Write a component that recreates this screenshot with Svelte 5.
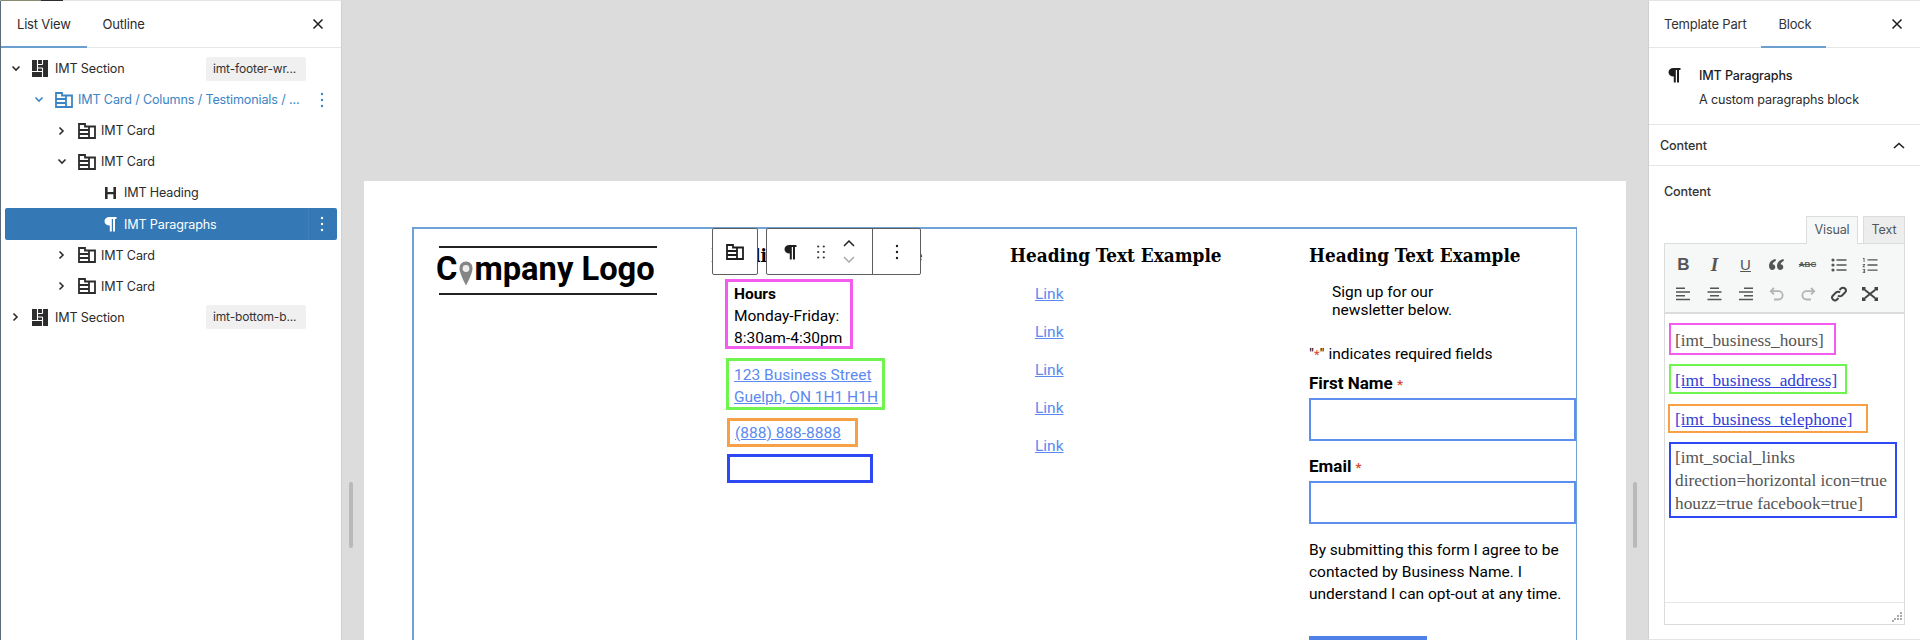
<script>
  const rows = [
    { depth: 0, chevron: "down", icon: "section", label: "IMT Section", tag: "imt-footer-wr..." },
    { depth: 1, chevron: "down", icon: "card", label: "IMT Card / Columns / Testimonials / ...", active: true, menu: true },
    { depth: 2, chevron: "right", icon: "card", label: "IMT Card" },
    { depth: 2, chevron: "down", icon: "card", label: "IMT Card" },
    { depth: 3, icon: "heading", label: "IMT Heading" },
    { depth: 3, icon: "para", label: "IMT Paragraphs", selected: true, menu: true },
    { depth: 2, chevron: "right", icon: "card", label: "IMT Card" },
    { depth: 2, chevron: "right", icon: "card", label: "IMT Card" },
    { depth: 0, chevron: "right", icon: "section", label: "IMT Section", tag: "imt-bottom-b..." },
  ];
  const links = ["Link", "Link", "Link", "Link", "Link"];
</script>

{#snippet cardIcon()}
  <svg width="18" height="16" viewBox="0 0 18 16" fill="none" stroke="currentColor" stroke-width="1.8">
    <path d="M1 1h6v2.500h10V15H1z" />
    <path d="M11 3.500V15M1 7h10M1 11h10" />
  </svg>
{/snippet}

{#snippet paraIcon()}
  <svg width="13" height="16" viewBox="0 0 13 16" fill="currentColor">
    <path d="M5.500 1H12.500V3H11V15.500H9V3H7.800V15.500H5.800V9.500H5.500C2.500 9.500.5 7.700.5 5.200S2.500 1 5.500 1z" />
  </svg>
{/snippet}

{#snippet closeIcon()}
  <svg width="12" height="12" viewBox="0 0 12 12" fill="none" stroke="currentColor" stroke-width="1.5">
    <path d="M1.500 1.500l9 9M10.500 1.500l-9 9" />
  </svg>
{/snippet}

{#snippet dots()}
  <svg width="4" height="16" viewBox="0 0 4 16" fill="currentColor">
    <circle cx="2" cy="2" r="1.200" /><circle cx="2" cy="8" r="1.200" /><circle cx="2" cy="14" r="1.200" />
  </svg>
{/snippet}

<div class="screen">
  <aside class="list-panel">
    <div class="top-strip"></div>
    <div class="tabs">
      <span class="tab on">List View</span>
      <span class="tab">Outline</span>
      <span class="close">{@render closeIcon()}</span>
    </div>
    <ul class="tree">
      {#each rows as row}
        <li class="row d{row.depth}" class:active={row.active} class:selected={row.selected}>
          <span class="chev">
            {#if row.chevron === "down"}
              <svg width="10" height="7" viewBox="0 0 10 7" fill="none" stroke="currentColor" stroke-width="1.6"><path d="M1.500 1.500L5 5l3.500-3.500" /></svg>
            {:else if row.chevron === "right"}
              <svg width="7" height="10" viewBox="0 0 7 10" fill="none" stroke="currentColor" stroke-width="1.6"><path d="M1.500 1.500L5 5 1.500 8.500" /></svg>
            {/if}
          </span>
          <span class="icon">
            {#if row.icon === "section"}
              <svg width="16" height="17" viewBox="0 0 16 17">
                <rect width="16" height="17" fill="currentColor" />
                <path d="M5.500 0v11.500M0 11.500h10.500M10.500 0v4.500M10.500 8v9M5.500 4.500h5M5.500 8h5" fill="none" stroke="#fff" stroke-width="1.100" />
              </svg>
            {:else if row.icon === "card"}
              {@render cardIcon()}
            {:else if row.icon === "heading"}
              <svg width="11" height="14" viewBox="0 0 11 14" fill="currentColor"><path d="M0 1h2.600v5h5.800V1H11v12H8.400V8.200H2.600V13H0z" /></svg>
            {:else}
              {@render paraIcon()}
            {/if}
          </span>
          <span class="label">{row.label}</span>
          {#if row.tag}<span class="tag">{row.tag}</span>{/if}
          {#if row.menu}<span class="menu">{@render dots()}</span>{/if}
        </li>
      {/each}
    </ul>
  </aside>

  <main class="canvas">
    <div class="scrollbar"></div>
    <div class="page">
      <div class="outline">
        <div class="col logo-col">
          <div class="logo">
            <span>C</span><span class="pin"><svg width="14" height="25" viewBox="0 0 14 25"><path fill="#858585" d="M7 .5C3 .5.500 3.500.500 7.500c0 5 6.500 17 6.500 17s6.500-12 6.500-17C13.500 3.500 11 .5 7 .5z" /><circle cx="7" cy="7.500" r="3.400" fill="#eee" /></svg></span><span>mpany Logo</span>
          </div>
        </div>

        <div class="col info-col">
          <h3>Heading Text Example</h3>
          <div class="box pink"><strong>Hours</strong><br />Monday-Friday:<br />8:30am-4:30pm</div>
          <div class="box green"><a href="#top">123 Business Street<br />Guelph, ON 1H1 H1H</a></div>
          <div class="box orange"><a href="#top">(888) 888-8888</a></div>
          <div class="box blue"></div>
        </div>

        <div class="col links-col">
          <h3>Heading Text Example</h3>
          <ul class="links">
            {#each links as link}
              <li><a href="#top">{link}</a></li>
            {/each}
          </ul>
        </div>

        <div class="col form-col">
          <h3>Heading Text Example</h3>
          <p class="intro">Sign up for our<br />newsletter below.</p>
          <p class="req">"<span class="star">*</span>" indicates required fields</p>
          <label class="fld" for="fn">First Name <span class="star">*</span></label>
          <input id="fn" type="text" />
          <label class="fld" for="em">Email <span class="star">*</span></label>
          <input id="em" type="text" />
          <p class="consent">By submitting this form I agree to be contacted by Business Name. I understand I can opt-out at any time.</p>
          <div class="submit"></div>
        </div>

        <div class="block-toolbar">
          <div class="tb-group parent"><span class="tb-ico">{@render cardIcon()}</span></div>
          <div class="tb-group main">
            <span class="tb-para">{@render paraIcon()}</span>
            <svg class="grip" width="8" height="14" viewBox="0 0 8 14" fill="currentColor">
              <circle cx="1.200" cy="1.500" r="1.100" /><circle cx="6.800" cy="1.500" r="1.100" />
              <circle cx="1.200" cy="7" r="1.100" /><circle cx="6.800" cy="7" r="1.100" />
              <circle cx="1.200" cy="12.500" r="1.100" /><circle cx="6.800" cy="12.500" r="1.100" />
            </svg>
            <span class="movers">
              <svg width="12" height="7" viewBox="0 0 12 7" fill="none" stroke="#222" stroke-width="1.500"><path d="M1 6l5-5 5 5" /></svg>
              <svg width="12" height="7" viewBox="0 0 12 7" fill="none" stroke="#aaa" stroke-width="1.500"><path d="M1 1l5 5 5-5" /></svg>
            </span>
            <span class="tb-more">{@render dots()}</span>
          </div>
        </div>
      </div>
    </div>
    <div class="scrollbar"></div>
  </main>

  <aside class="side-panel">
    <div class="tabs side">
      <span class="tab">Template Part</span>
      <span class="tab on">Block</span>
      <span class="close">{@render closeIcon()}</span>
    </div>
    <div class="block-card">
      <span class="bc-icon">{@render paraIcon()}</span>
      <div>
        <div class="bc-title">IMT Paragraphs</div>
        <div class="bc-desc">A custom paragraphs block</div>
      </div>
    </div>
    <div class="section-head">
      <span>Content</span>
      <svg width="12" height="7" viewBox="0 0 12 7" fill="none" stroke="#1e1e1e" stroke-width="1.600"><path d="M1 6l5-4.500L11 6" /></svg>
    </div>
    <div class="section-body">
      <div class="field-label">Content</div>
      <div class="ed-tabs">
        <span class="ed-tab on">Visual</span>
        <span class="ed-tab">Text</span>
      </div>
      <div class="editor">
        <div class="mce-bar">
          <span class="b">B</span>
          <span class="i">I</span>
          <span class="u">U</span>
          <svg width="15" height="11" viewBox="0 0 15 11" fill="#555"><path d="M6.500 0C2.800.8 0 3.200 0 7c0 2.300 1.300 4 3.300 4 1.700 0 3-1.200 3-2.900S5.100 5.300 3.600 5.300c.2-1.400 1.500-2.600 3.300-3.300zM14.500 0c-3.700.8-6.500 3.200-6.500 7 0 2.300 1.300 4 3.300 4 1.700 0 3-1.200 3-2.900s-1.200-2.800-2.700-2.800c.2-1.400 1.500-2.600 3.300-3.300z" /></svg>
          <span class="abc">ABC</span>
          <svg width="16" height="14" viewBox="0 0 16 14" fill="#555"><circle cx="2" cy="2" r="1.600" /><circle cx="2" cy="7" r="1.600" /><circle cx="2" cy="12" r="1.600" /><path d="M5.500 1.200h10v1.500h-10zM5.500 6.200h10v1.500h-10zM5.500 11.200h10v1.500h-10z" /></svg>
          <svg width="16" height="16" viewBox="0 0 16 16" fill="#555"><path d="M5.500 2.200h10v1.400h-10zM5.500 7.300h10v1.400h-10zM5.500 12.400h10v1.400h-10zM1 1h1.500v4H1.600V2H1zM.6 7h2.500v.8L1.600 9.600h1.500v.7H.6v-.7l1.500-1.800H.6zM.6 12h2.500v4H.6v-.7h1.700v-.9H1v-.6h1.300v-1H.6z" /></svg>
          <svg width="15" height="14" viewBox="0 0 15 14" fill="#555"><path d="M0 .5h9v1.500H0zM0 4.200h14v1.500H0zM0 8h9v1.500H0zM0 11.800h14v1.500H0z" /></svg>
          <svg width="15" height="14" viewBox="0 0 15 14" fill="#555"><path d="M3 .5h9v1.500H3zM.5 4.200h14v1.500H.5zM3 8h9v1.500H3zM.5 11.800h14v1.500H.5z" /></svg>
          <svg width="15" height="14" viewBox="0 0 15 14" fill="#555"><path d="M6 .5h9v1.500H6zM1 4.200h14v1.500H1zM6 8h9v1.500H6zM1 11.800h14v1.500H1z" /></svg>
          <svg width="16" height="14" viewBox="0 0 16 14" fill="none" stroke="#b4b4b4" stroke-width="1.800"><path d="M5 1L1.800 4.200 5 7.400M2 4.200h7.500a4 4 0 0 1 0 8.300H5" /></svg>
          <svg width="16" height="14" viewBox="0 0 16 14" fill="none" stroke="#b4b4b4" stroke-width="1.800"><path d="M11 1l3.200 3.200L11 7.400M14 4.200H6.500a4 4 0 0 0 0 8.300H11" /></svg>
          <svg width="16" height="16" viewBox="0 0 16 16" fill="none" stroke="#444" stroke-width="2"><path d="M7 9.500a2.800 2.800 0 0 0 4 0l3-3a2.800 2.800 0 0 0-4-4L8.500 4" /><path d="M9 6.500a2.800 2.800 0 0 0-4 0l-3 3a2.800 2.800 0 0 0 4 4L7.500 12" /></svg>
          <svg width="16" height="14" viewBox="0 0 16 14"><path d="M3 3l10 8M13 3L3 11" stroke="#444" stroke-width="2" fill="none" /><path fill="#444" d="M0 0h3.500v3.500H0zM12.500 0H16v3.500h-3.500zM0 10.500h3.500V14H0zM12.500 10.500H16V14h-3.500z" /></svg>
        </div>
        <div class="mce-body">
          <div class="code-box c-pink">[imt_business_hours]</div>
          <div class="code-box c-green"><a href="#top">[imt_business_address]</a></div>
          <div class="code-box c-orange"><a href="#top">[imt_business_telephone]</a></div>
          <div class="code-box c-blue">[imt_social_links direction=horizontal icon=true houzz=true facebook=true]</div>
        </div>
        <div class="mce-status">
          <svg width="10" height="10" viewBox="0 0 10 10" fill="#aaa"><path d="M8 0h2v2H8zM5 3h2v2H5zM8 3h2v2H8zM2 6h2v2H2zM5 6h2v2H5zM8 6h2v2H8zM0 8h2v2H0z" /></svg>
        </div>
      </div>
    </div>
  </aside>
</div>

<style>
  :global(body) {
    margin: 0;
    overflow: hidden;
  }

  .screen {
    width: 1920px;
    height: 640px;
    display: flex;
    overflow: hidden;
    background: #fff;
    color: #1e1e1e;
    font-family: Inter, "Noto Sans", sans-serif;
    font-size: 12.6px;
    letter-spacing: -0.15px;
  }

  .list-panel {
    width: 342px;
    flex: none;
    box-sizing: border-box;
    border-left: 1px solid #5c6b7a;
    border-right: 1px solid #d0d0d0;
    border-top: 1px solid #e4e4e4;
    position: relative;
  }

  .top-strip {
    position: absolute;
    left: 0;
    top: -1px;
    width: 62px;
    height: 1px;
    background: linear-gradient(to right, #8a8a70 0 65%, #2e2e2e 65% 100%);
  }

  .tabs {
    height: 47px;
    display: flex;
    align-items: stretch;
    border-bottom: 1px solid #e6e6e6;
    box-sizing: border-box;
    position: relative;
  }

  .tab {
    display: flex;
    align-items: center;
    padding: 0 16px;
    color: #2c2c2c;
    font-size: 13px;
    letter-spacing: -0.2px;
    border-bottom: 2px solid transparent;
    margin-bottom: -1px;
  }

  .tab.on {
    border-bottom-color: #6a9fd0;
  }

  .close {
    margin-left: auto;
    padding-right: 17px;
    display: flex;
    align-items: center;
  }

  .tree {
    list-style: none;
    margin: 5px 0 0;
    padding: 0 4px;
  }

  .row {
    height: 31.1px;
    display: flex;
    align-items: center;
    box-sizing: border-box;
    border-radius: 2px;
    color: #2c2c2c;
  }

  .row.d1 { padding-left: 23px; }
  .row.d2 { padding-left: 46px; }
  .row.d3 { padding-left: 69px; }

  .chev {
    width: 23px;
    display: flex;
    justify-content: center;
    flex: none;
    padding-right: 2px;
    box-sizing: border-box;
  }

  .icon {
    width: 18px;
    margin: 0 5px 0 4px;
    flex: none;
    display: flex;
    align-items: center;
  }

  .d3 .icon {
    justify-content: center;
  }

  .label {
    white-space: nowrap;
  }

  .tag {
    position: absolute;
    left: 205px;
    width: 100px;
    height: 24px;
    box-sizing: border-box;
    padding-left: 7px;
    line-height: 24px;
    background: #f0f0f0;
    border-radius: 2px;
    font-size: 12px;
    color: #333;
  }

  .menu {
    position: absolute;
    left: 319px;
    display: flex;
  }

  .row.active {
    color: #3a85c5;
  }

  .row.selected {
    background: #3479b5;
    color: #fff;
    position: relative;
  }

  .row.selected .menu {
    left: 303px;
    top: 0;
    bottom: 0;
    width: 26px;
    justify-content: center;
    align-items: center;
    border-left: 1px solid #3e80ba;
  }

  .canvas {
    flex: 1;
    display: flex;
    align-items: flex-start;
    background: #dcdcdc;
    position: relative;
  }

  .scrollbar {
    width: 4px;
    height: 66px;
    background: #b9b9b9;
    border-radius: 2px;
    align-self: flex-start;
    margin-top: 482px;
    flex: none;
    margin-left: 7px;
    margin-right: 11px;
  }

  .page {
    flex: 1;
    margin-top: 181px;
    height: 459px;
    background: #fff;
    padding: 46px 49px 0 48px;
    box-sizing: border-box;
    overflow: hidden;
  }

  .outline {
    height: 460px;
    border: 2px solid #6fa3d6;
    border-bottom: 0;
    border-right-width: 1px;
    box-sizing: border-box;
    display: grid;
    grid-template-columns: 297px 299px 299px 1fr;
    position: relative;
    color: #000;
    font-family: Roboto, sans-serif;
    font-size: 15.5px;
    letter-spacing: 0;
    line-height: 22px;
  }

  .col {
    min-width: 0;
  }

  h3 {
    margin: 13px 0 0;
    font-family: "DejaVu Serif", serif;
    font-stretch: condensed;
    font-size: 18.8px;
    line-height: 26px;
    font-weight: 700;
    white-space: nowrap;
  }

  .logo-col {
    padding: 17px 0 0 23px;
  }

  .logo {
    width: 218px;
    height: 49px;
    box-sizing: border-box;
    border-top: 2px solid #222;
    border-bottom: 2px solid #222;
    padding-bottom: 4px;
    display: flex;
    align-items: center;
    font-size: 32.7px;
    font-weight: 700;
    line-height: 44px;
    white-space: nowrap;
    margin-left: 2px;
  }

  .logo span:first-child {
    margin-left: -3px;
  }

  .pin {
    display: flex;
    width: 14px;
    margin: 10px 1px 0 2px;
    flex: none;
  }

  .info-col h3 { margin-bottom: 11px; }

  .box {
    box-sizing: border-box;
    border-width: 3px;
    border-style: solid;
    margin-left: 14px;
    padding-left: 6px;
    white-space: nowrap;
  }

  .pink {
    width: 128px;
    height: 70px;
    border-color: #f45cf0;
    padding-top: 1px;
  }

  .green {
    width: 159px;
    height: 52px;
    border-color: #6ff550;
    margin-top: 9px;
    margin-left: 15px;
    padding: 3px 0 0 5px;
  }

  .orange {
    width: 131px;
    height: 29px;
    border-color: #f7a046;
    margin-top: 8px;
    margin-left: 16px;
    padding: 1px 0 0 5px;
  }

  .blue {
    width: 146px;
    height: 29px;
    border-color: #2e48f5;
    margin-top: 7px;
    margin-left: 16px;
  }

  a {
    color: #5b8af0;
    text-decoration: underline;
  }

  .links {
    list-style: none;
    margin: 11.5px 0 0;
    padding: 0 0 0 25px;
  }

  .links li {
    height: 38px;
    line-height: 22px;
    padding-top: 3px;
    box-sizing: border-box;
  }

  .form-col {
    display: flex;
    flex-direction: column;
    align-items: flex-start;
  }

  .intro {
    margin: 15px 0 0 23px;
    line-height: 18px;
  }

  .req {
    margin: 24px 0 0;
    line-height: 22px;
  }

  .star {
    color: #d8482e;
    font-size: 13px;
  }

  .fld {
    font-weight: 700;
    font-size: 17px;
    line-height: 21px;
    margin-top: 6.5px;
    white-space: nowrap;
  }

  input {
    display: block;
    box-sizing: border-box;
    width: 100%;
    height: 43px;
    margin: 3px 0 0;
    padding: 0;
    border: 2px solid #5e8eee;
    background: #fff;
    outline: 0;
  }

  input + .fld {
    margin-top: 15px;
  }

  .consent {
    margin: 15px 0 0;
    width: 258px;
  }

  .submit {
    width: 118px;
    height: 30px;
    margin-top: 31px;
    background: #4f82e8;
    flex: none;
  }

  .block-toolbar {
    position: absolute;
    left: 298px;
    top: -1px;
    display: flex;
    gap: 8px;
    z-index: 2;
  }

  .tb-group {
    height: 47px;
    box-sizing: border-box;
    background: #fff;
    border: 1px solid #5d5d5d;
    border-radius: 2px;
    color: #1e1e1e;
    display: flex;
    align-items: center;
  }

  .parent {
    width: 46px;
    justify-content: center;
  }

  .tb-ico { display: flex; }

  .main {
    width: 155px;
  }

  .tb-para {
    display: flex;
    margin-left: 17px;
  }

  .grip {
    margin-left: 20px;
    color: #333;
  }

  .movers {
    margin-left: 18px;
    display: flex;
    flex-direction: column;
    gap: 9px;
  }

  .tb-more {
    display: flex;
    align-items: center;
    align-self: stretch;
    margin-left: auto;
    width: 47px;
    justify-content: center;
    border-left: 1px solid #5d5d5d;
  }

  .side-panel {
    width: 272px;
    flex: none;
    box-sizing: border-box;
    border-left: 1px solid #cfcfcf;
    border-top: 1px solid #e4e4e4;
    border-bottom: 1px solid #e4e4e4;
  }

  .side .tab {
    padding: 0 15px;
    color: #333;
  }

  .side .tab.on {
    padding-left: 17px;
  }

  .block-card {
    display: flex;
    height: 77px;
    box-sizing: border-box;
    border-bottom: 1px solid #e6e6e6;
    padding: 18px 0 0 19px;
    gap: 18px;
  }

  .bc-icon {
    display: flex;
    align-items: flex-start;
    margin-top: 1px;
  }

  .bc-title {
    font-weight: 500;
    line-height: 20px;
  }

  .bc-desc {
    line-height: 20px;
    margin-top: 4px;
    color: #2c2c2c;
  }

  .section-head {
    height: 41px;
    box-sizing: border-box;
    border-bottom: 1px solid #e6e6e6;
    padding: 0 15px 0 11px;
    display: flex;
    justify-content: space-between;
    align-items: center;
    color: #333;
    font-weight: 500;
  }

  .section-body {
    padding: 16px 15px 0 15px;
  }

  .field-label {
    line-height: 20px;
    color: #333;
    font-weight: 500;
  }

  .ed-tabs {
    display: flex;
    justify-content: flex-end;
    gap: 5px;
    margin-top: 14px;
    height: 27px;
    position: relative;
    z-index: 1;
  }

  .ed-tab {
    border: 1px solid #dcdcdc;
    border-bottom: 0;
    padding: 0 5px;
    width: 42px;
    box-sizing: border-box;
    text-align: center;
    line-height: 26px;
    background: #ededed;
    color: #50575e;
  }

  .ed-tab.on {
    width: 52px;
    background: #f6f7f7;
    height: 28px;
  }

  .editor {
    border: 1px solid #dcdcdc;
    height: 382px;
    box-sizing: border-box;
    display: flex;
    flex-direction: column;
  }

  .mce-bar {
    height: 70px;
    box-sizing: border-box;
    background: #f6f7f7;
    border-bottom: 2px solid #dcdcdc;
    display: grid;
    grid-template-columns: repeat(7, 31px);
    grid-auto-rows: 29px;
    justify-items: center;
    align-items: center;
    padding: 6px 0 0 3px;
    color: #555;
    font-family: "Liberation Sans", sans-serif;
    letter-spacing: 0;
  }

  .b { font-weight: 700; font-size: 17px; }
  .i { font-family: "Liberation Serif", serif; font-style: italic; font-weight: 700; font-size: 19px; }
  .u { font-size: 15px; text-decoration: underline; }
  .abc { font-size: 8px; font-weight: 700; text-decoration: line-through; }

  .mce-body {
    flex: 1;
    padding: 9px 0 0 4px;
    font-family: "Liberation Serif", serif;
    font-size: 17.3px;
    letter-spacing: 0;
    line-height: 23px;
    color: #555;
  }

  .code-box {
    box-sizing: border-box;
    border: 2px solid;
    padding: 0 4px;
    line-height: 23px;
    white-space: normal;
  }

  .code-box a {
    color: #2f3fd8;
  }

  .c-pink { border-color: #f45cf0; width: 167px; height: 32px; padding-top: 4px; white-space: nowrap; }
  .c-green { border-color: #6ff550; width: 178px; height: 30px; margin-top: 9px; padding-top: 3px; white-space: nowrap; }
  .c-orange { border-color: #f7a046; width: 200px; height: 29px; margin-top: 10px; margin-left: -1px; padding: 2px 0 0 5px; white-space: nowrap; }
  .c-blue { border-color: #2e48f5; width: 228px; height: 76px; margin-top: 9px; padding-top: 2px; }

  .mce-status {
    height: 19px;
    border-top: 1px solid #e6e6e6;
    display: flex;
    justify-content: flex-end;
    align-items: flex-end;
    padding: 0 2px 2px 0;
  }
</style>
